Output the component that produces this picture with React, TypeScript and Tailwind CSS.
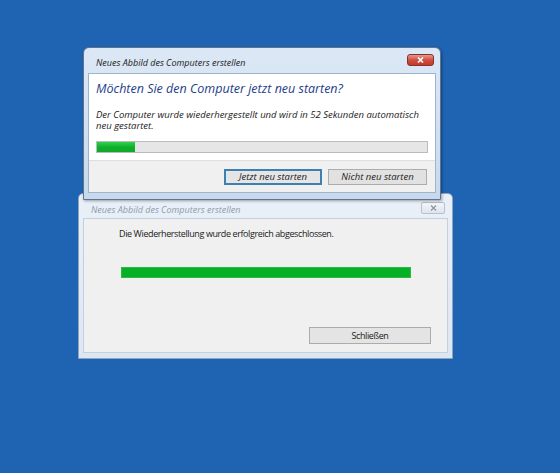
import React from "react";

export default function App() {
  return (
    <div className="relative w-[560px] h-[473px] bg-[#1f64b3] overflow-hidden font-['Open_Sans',sans-serif]">
      {/* Back window (inactive) */}
      <div className="absolute left-[78px] top-[193px] w-[375px] h-[166px] flex flex-col rounded-t-[5px] border border-[#8ea3bd] bg-gradient-to-b from-[#e9f0f8] to-[#dde7f2] px-[4px] pb-[5px]">
        <div className="relative h-[24px] flex items-center pl-[8px] pt-[6px]">
          <span className="text-[9px] italic text-[#8f9bac] leading-none">Neues Abbild des Computers erstellen</span>
          <div className="absolute right-[3px] top-[8px] w-[24px] h-[12px] rounded-[2px] border border-[#b6c1cf] bg-gradient-to-b from-[#f3f6f9] to-[#dfe5ec] flex items-center justify-center">
            <svg width="7" height="6" viewBox="0 0 7 6">
              <path d="M1 0.5 L6 5.5 M6 0.5 L1 5.5" stroke="#8893a2" strokeWidth="1.1" fill="none" />
            </svg>
          </div>
        </div>
        <div className="flex-1 bg-[#f0f0f0] border border-[#c3d0e0] flex flex-col pl-[35px] pt-[8px]">
          <div className="text-[9px] tracking-[-0.4px] leading-[14px] text-[#1a1a1a]">Die Wiederherstellung wurde erfolgreich abgeschlossen.</div>
          <div className="mt-[26px] ml-[2px] w-[290px] h-[11px] bg-[#06b025] border border-[#2fb845]" />
          <div className="mt-[49px] ml-[190px] w-[122px] h-[17px] border border-[#acacac] bg-[#e4e4e4] flex items-center justify-center text-[9px] tracking-[-0.4px] text-[#1a1a1a]">
            Schließen
          </div>
        </div>
      </div>

      {/* Front window (active) */}
      <div className="absolute left-[83px] top-[47px] w-[358px] h-[153px] flex flex-col rounded-t-[6px] border border-[#5f7491] bg-gradient-to-b from-[#dce8f5] to-[#c8d9ed] px-[4px] pb-[6px] shadow-[1px_1px_3px_rgba(0,0,0,0.35)]">
        <div className="relative h-[25px] flex items-center pl-[8px] pt-[4px]">
          <span className="text-[9px] italic text-[#1b1b1b] leading-none">Neues Abbild des Computers erstellen</span>
          <div className="absolute right-[2px] top-[6px] w-[27px] h-[12px] rounded-[3px] border border-[#8a2f29] bg-gradient-to-b from-[#e49a8f] via-[#cf4f40] to-[#c1392b] flex items-center justify-center">
            <svg width="7" height="6" viewBox="0 0 7 6">
              <path d="M1 0.5 L6 5.5 M6 0.5 L1 5.5" stroke="#ffffff" strokeWidth="1.6" fill="none" />
            </svg>
          </div>
        </div>
        <div className="flex-1 flex flex-col border border-[#9fb3cc]">
          <div className="bg-white flex flex-col px-[7px] pt-[7px] pb-[7px]">
            <div className="text-[12.5px] italic leading-[16px] text-[#1e3d8a]">Möchten Sie den Computer jetzt neu starten?</div>
            <div className="mt-[12px] w-[328px] text-[9.5px] italic leading-[11px] text-[#1a1a1a]">
              Der Computer wurde wiederhergestellt und wird in 52 Sekunden automatisch neu gestartet.
            </div>
            <div className="mt-[10px] h-[12px] border border-[#bcbcbc] bg-[#e6e6e6] flex">
              <div className="w-[38px] h-full bg-gradient-to-b from-[#2fd24a] via-[#0fb02b] to-[#11a82a]" />
            </div>
          </div>
          <div className="flex-1 bg-[#f0f0f0] border-t border-[#dfdfdf] flex justify-end items-start pt-[8px] pr-[8px] gap-[6px]">
            <div className="w-[98px] h-[16px] border-2 border-[#3c7fb1] bg-[#e5e5e5] flex items-center justify-center text-[9.5px] italic text-[#1a1a1a]">
              Jetzt neu starten
            </div>
            <div className="w-[99px] h-[16px] border border-[#adadad] bg-[#e1e1e1] flex items-center justify-center text-[9.5px] italic text-[#1a1a1a]">
              Nicht neu starten
            </div>
          </div>
        </div>
      </div>
    </div>
  );
}
